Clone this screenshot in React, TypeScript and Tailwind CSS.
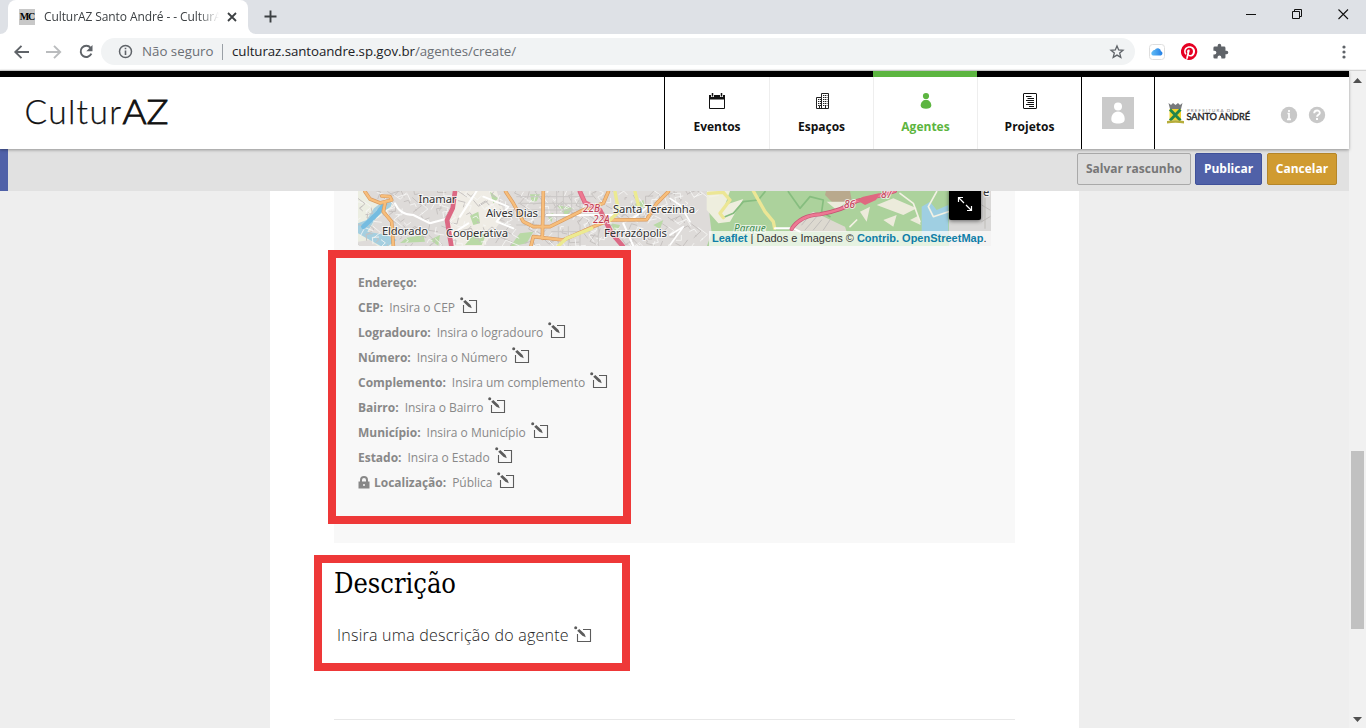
import React from "react";

const UI = "font-['Open_Sans','Noto_Sans',sans-serif]";

function EditIcon({ className = "" }: { className?: string }) {
  return (
    <svg width="18" height="17" viewBox="0 0 18 17" className={"shrink-0 " + className} fill="none">
      <path d="M9 3.500H16.500V15.500H3.500V8" stroke="#5c5c5c" strokeWidth="1.100" />
      <circle cx="1.700" cy="1.800" r="1.500" fill="#5c5c5c" />
      <path d="M3.200 4.800L5.300 3L10.600 8L11.800 11.300L8.400 9.800Z" fill="#5c5c5c" />
    </svg>
  );
}

function TabStrip() {
  return (
    <div className="flex h-[34px] bg-[#dee1e6]">
      <div className="flex w-2 items-end">
        <div className="h-2 w-2 bg-white"><div className="h-2 w-2 rounded-br-lg bg-[#dee1e6]" /></div>
      </div>
      <div className="flex h-[34px] w-60 items-center rounded-t-lg bg-white pl-[11px]">
        <div className="flex h-4 w-4 items-center justify-center bg-[#c8c8c8]">
          <span className="font-['Liberation_Serif',serif] text-[10px] font-bold leading-none tracking-[-1px] text-black">MC</span>
        </div>
        <div className="ml-[9px] w-[175px] overflow-hidden whitespace-nowrap text-[12px] leading-4 tracking-[-0.09px] text-[#3c4043] [mask-image:linear-gradient(to_right,black_88%,transparent)]">
          CulturAZ Santo André - - CulturA
        </div>
        <svg width="10" height="10" viewBox="0 0 10 10" className="ml-2"><path d="M1 1L9 9M9 1L1 9" stroke="#3c4043" strokeWidth="1.8" /></svg>
      </div>
      <div className="flex w-2 items-end">
        <div className="h-2 w-2 bg-white"><div className="h-2 w-2 rounded-bl-lg bg-[#dee1e6]" /></div>
      </div>
      <svg width="13" height="13" viewBox="0 0 13 13" className="ml-[8px] mt-[10px]"><path d="M6.5 .5V12.5M.5 6.5H12.5" stroke="#3c4043" strokeWidth="1.9" /></svg>
      <div className="grow" />
      <svg width="112" height="28" viewBox="0 0 112 28" fill="none" stroke="#111" className="mr-2">
        <path d="M0 14.5H10" />
        <path d="M46.5 11.5H53.5V18.5H46.5ZM48.5 11.5V9.500H55.5V16.500H53.5" />
        <path d="M92.500 9.500L102 19M102 9.500L92.500 19" strokeWidth="1.1" />
      </svg>
    </div>
  );
}

function Toolbar() {
  return (
    <div className="flex h-9 items-center border-b border-[#f4f4f4] bg-white">
      <svg width="90" height="20" viewBox="0 0 90 20" fill="none" className="ml-[10px]" strokeWidth="1.9">
        <path d="M19 10H5.5M11.500 3.800L5.300 10L11.500 16.200" stroke="#5f6368" />
        <path d="M36 10H50M44 3.800L50.200 10L44 16.200" stroke="#babcbe" />
        <path d="M80.600 5.800A5.600 5.600 0 1 0 81.400 11.700" stroke="#5f6368" />
        <path d="M82.500 3V9.200H76.300Z" fill="#5f6368" />
      </svg>
      <div className="ml-[1px] flex h-[27px] w-[1034px] items-center rounded-full bg-[#f1f3f4] pl-[17px] pr-[10px]">
        <svg width="15" height="15" viewBox="0 0 15 15" fill="none"><circle cx="7.500" cy="7.500" r="6" stroke="#5f6368" strokeWidth="1.5" /><path d="M7.500 6.500V11M7.500 3.800V5.300" stroke="#5f6368" strokeWidth="1.6" /></svg>
        <span className="ml-[9px] mt-px w-[73px] whitespace-nowrap text-[13.300px] text-[#6b6f74]">Não seguro</span>
        <span className="ml-[7px] h-4 w-px bg-[#9aa0a6]" />
        <span className="ml-[9px] mt-px whitespace-nowrap text-[13.300px] tracking-[-0.07px] text-[#202124]">culturaz.santoandre.sp.gov.br<span className="text-[#6b6f74]">/agentes/create/</span></span>
        <span className="grow" />
        <svg width="16" height="16" viewBox="0 0 16 16" fill="none"><path d="M8 2L9.700 6L14 6.300L10.700 9.100L11.800 13.400L8 11.100L4.200 13.400L5.300 9.100L2 6.300L6.300 6Z" stroke="#5f6368" strokeWidth="1.3" /></svg>
      </div>
      <svg width="16" height="16" viewBox="0 0 16 16" className="ml-[14px]">
        <defs><linearGradient id="cloud"><stop stopColor="#61bdf6" /><stop offset="1" stopColor="#247fe5" /></linearGradient></defs>
        <rect x=".5" y=".5" width="15" height="15" rx="3" fill="#fff" stroke="#dedede" />
        <path d="M4 11.500A2.200 2.200 0 0 1 3.300 7.500A2.200 2.200 0 0 1 5.700 6A3.400 3.400 0 0 1 12 7.200A2.300 2.300 0 0 1 12 11.500Z" fill="url(#cloud)" />
      </svg>
      <svg width="17" height="17" viewBox="0 0 24 24" className="ml-4"><path fill="#e60023" d="M12 0a12 12 0 0 0-4.400 23.200c-.1-.9-.2-2.400 0-3.400l1.400-6s-.4-.7-.4-1.700c0-1.700 1-2.900 2.200-2.900 1 0 1.500.8 1.500 1.700 0 1-.7 2.600-1 4-.3 1.200.6 2.200 1.800 2.200 2.100 0 3.800-2.200 3.800-5.500 0-2.900-2.100-4.900-5-4.900-3.400 0-5.400 2.600-5.400 5.200 0 1 .4 2.100.9 2.700.1.100.1.200.1.400l-.3 1.400c-.1.200-.2.300-.4.200-1.500-.7-2.400-2.900-2.400-4.700 0-3.800 2.800-7.300 8-7.300 4.200 0 7.400 3 7.400 7 0 4.200-2.600 7.500-6.300 7.500-1.200 0-2.400-.6-2.800-1.400l-.7 2.900c-.3 1-1 2.300-1.500 3.100A12 12 0 1 0 12 0Z" /></svg>
      <svg width="17" height="17" viewBox="0 0 24 24" className="ml-[14px]"><path fill="#5f6368" d="M20.500 11H19V7a2 2 0 0 0-2-2h-4V3.500a2.500 2.500 0 0 0-5 0V5H4a2 2 0 0 0-2 2v3.800h1.500a2.700 2.700 0 0 1 0 5.400H2V20a2 2 0 0 0 2 2h3.800v-1.500a2.700 2.700 0 0 1 5.400 0V22H17a2 2 0 0 0 2-2v-4h1.500a2.500 2.500 0 0 0 0-5Z" /></svg>
      <span className="grow" />
      <svg width="4" height="16" viewBox="0 0 4 16" fill="#5f6368" className="mr-[20px]"><circle cx="2" cy="3" r="1.600" /><circle cx="2" cy="8" r="1.600" /><circle cx="2" cy="13" r="1.600" /></svg>
    </div>
  );
}

function CalendarIcon() {
  return <svg width="18" height="18" viewBox="0 0 18 18"><path d="M1.500 4V16.500H16.500V4" fill="none" stroke="#111" /><path d="M1 3H3V5H6V3H12V5H15V3H17V7.500H1Z" fill="#111" /><path d="M4.500 1V4.500M13.500 1V4.500" stroke="#111" strokeWidth="1.500" /></svg>;
}
function BuildingIcon() {
  return <svg width="18" height="18" viewBox="0 0 18 18" fill="none" stroke="#222"><path d="M3.500 16.500V5.500H8.500V1.500H15.500V16.500ZM8.500 5.500V16" /><path d="M5 7.500H8M5 9.500H8M5 11.500H8M5 13.500H8M10 3.500H14.500M10 5.500H14.500M10 7.500H14.500M10 9.500H14.500M10 11.500H14.500M10 13.500H14.500" strokeDasharray="1.300 .6" /><path d="M6.500 13.500V16M12.500 13.500V16" /></svg>;
}
function AgentIcon() {
  return <svg width="18" height="18" viewBox="0 0 18 18" fill="#5cb540"><circle cx="9" cy="4" r="3.100" /><path d="M9 7.700C5.500 7.700 3.700 11 3.700 13.500C3.700 15.800 6 16.700 9 16.700S14.300 15.800 14.300 13.500C14.300 11 12.500 7.700 9 7.700Z" /></svg>;
}
function ProjectIcon() {
  return <svg width="18" height="18" viewBox="0 0 18 18" fill="none" stroke="#111"><rect x="2.500" y="1.500" width="13" height="15" rx=".5" /><path d="M5 4.500H10.500M6.500 6.500H13M5 8.500H13M6.500 10.500H13M5 12.500H13M8 14.500H13" /></svg>;
}

function NavItem({ label, icon, active = false, first = false }: { label: string; icon: React.ReactNode; active?: boolean; first?: boolean }) {
  return (
    <div className={"flex w-[104px] flex-col " + (first ? "" : "border-l border-[#eeeeee]")}>
      <div className={"h-[6px] " + (first ? "" : "-ml-px ") + (active ? "bg-[#5cb540]" : "bg-black")} />
      <div className="flex flex-col items-center pt-[15px]">
        {icon}
        <span className={"mt-[8px] text-[12px] font-bold leading-[18px] " + (active ? "text-[#5cb540]" : "text-[#111]")}>{label}</span>
      </div>
    </div>
  );
}

function CityLogo() {
  return (
    <svg width="90" height="24" viewBox="0 0 90 24">
      <path d="M1.500 1L4 3L6 1L8.500 3L11 1L13 3L15.500 1L14 7H3Z" fill="#77797c" />
      <path d="M2.500 7H14V18.500H2.500Z" fill="#f2d42b" />
      <path d="M3 7.500L13.500 18.500M13.500 7.500L3 18.500" stroke="#23854b" strokeWidth="2.800" />
      <path d="M0 19Q8.500 17.500 17 19V21.500Q8.500 20 0 21.500Z" fill="#b6ad3b" />
      <text x="20" y="9.500" fontSize="4.500" fill="#888" textLength="47" fontFamily="Lato, sans-serif">PREFEITURA DE</text>
      <text x="19.500" y="17.500" fontSize="9.300" fontWeight="400" fill="#222" stroke="#222" strokeWidth=".35" textLength="63.500" fontFamily="Lato, sans-serif">SANTO ANDRÉ</text>
    </svg>
  );
}

function Header() {
  return (
    <header className="relative z-10 flex h-[78px] bg-white shadow-[0_1px_3px_rgba(0,0,0,0.35)]">
      <div className="flex w-[664px] flex-col">
        <div className="h-[6px] bg-black" />
        <svg width="170" height="56" viewBox="0 -8 170 56" className="ml-5 mt-[8px]" fontFamily="Lato, sans-serif" fill="#111">
          <text x="4.500" y="31" fontSize="33.500" fontWeight="300" stroke="#111" strokeWidth=".25" textLength="96.500">Cultur</text>
          <text x="102.500" y="31" fontSize="33.500" fontWeight="300" stroke="#111" strokeWidth=".9" textLength="46" lengthAdjust="spacingAndGlyphs">AZ</text>
        </svg>
      </div>
      <div className="flex w-[418px] border-x border-black">
        <NavItem label="Eventos" icon={<CalendarIcon />} first />
        <NavItem label="Espaços" icon={<BuildingIcon />} />
        <NavItem label="Agentes" icon={<AgentIcon />} active />
        <NavItem label="Projetos" icon={<ProjectIcon />} />
      </div>
      <div className="flex w-[73px] flex-col items-center border-r border-black">
        <div className="h-[6px] w-full bg-black" />
        <svg width="32" height="32" viewBox="0 0 32 32" className="mt-5"><path d="M0 0H32V32H0Z" fill="#cacaca" /><g fill="#fff"><circle cx="16" cy="9.500" r="4" /><path d="M16 14.500C11.500 14.500 9.300 18.500 9.300 22S12 26.500 16 26.500S22.700 25.500 22.700 22S20.500 14.500 16 14.500Z" /></g></svg>
      </div>
      <div className="flex grow flex-col">
        <div className="h-[6px] bg-black" />
        <div className="flex items-center pl-3 pt-[25px]">
          <CityLogo />
          <svg width="46" height="18" viewBox="0 0 46 18" className="ml-[23px] mt-[2px]"><circle cx="9" cy="9" r="8.200" fill="#c8c8c8" /><circle cx="37" cy="9" r="8.200" fill="#c8c8c8" /><path d="M7.500 7.500H9V13M7 13.300H11M9 4V6" fill="none" stroke="#fff" strokeWidth="1.700" /><path d="M34.200 7.300C34.200 3.500 40 3.700 39.800 7C39.700 8.700 37 8.800 37 10.700M37 12V14" fill="none" stroke="#fff" strokeWidth="1.900" /></svg>
        </div>
      </div>
    </header>
  );
}

function ActionBar() {
  return (
    <div className="flex h-[42px] bg-[#e1e1e1]">
      <div className="w-2 bg-[#5061a8]" />
      <div className="flex grow items-start justify-end gap-[5px] pr-3 pt-1 text-[12px] font-bold">
        <button className="h-8 w-[114px] whitespace-nowrap rounded-[2px] border border-[#a9a9a9] bg-[#dedede] text-[#777]">Salvar rascunho</button>
        <button className="-ml-px h-8 w-[67px] rounded-[2px] border border-[#40519a] bg-[#5061a8] text-white">Publicar</button>
        <button className="h-8 w-[70px] rounded-[2px] border border-[#b58629] bg-[#d09b31] text-white">Cancelar</button>
      </div>
    </div>
  );
}

const streetLines = Array.from({ length: 150 }, (_, i) => {
  const x = (i * 137.5) % 1050;
  const y = (i * 61.7) % 190;
  const dx = ((i * 29) % 60) - 30;
  const dy = ((i * 43) % 50) - 25;
  return `M${x} ${y}l${dx} ${dy}l${-dy} ${dx * 0.7}`;
}).join("");

function MapView() {
  return (
    <div className="relative h-[55px] w-[633px] overflow-hidden">
      <svg width="633" height="55" viewBox="0 0 633 55" className="block" fill="none">
        <path d="M0 0H633V55H0Z" fill="#dedbd9" />
        <g transform="translate(-8 -6) scale(.33333)" strokeLinejoin="round" strokeLinecap="round">
          <path d="M315 18L440 18L465 90L400 185H310L295 130Z" fill="#efece5" />
          <path d="M24 18H45L75 52L130 60L110 80L75 105L55 140L120 160L130 185H85L60 165L24 170Z" fill="#eceee2" />
          <path d="M105 45L130 40L122 65L80 95L52 140L110 150L140 165L115 183H92L50 160L24 145V115L50 105L72 70Z" fill="#a5cfe0" />
          <g fill="#b9d9a6"><path d="M510 145L550 140L530 175L480 185ZM540 28L570 28L560 48L545 52ZM360 92L385 80L390 115L370 120ZM620 60L670 70L650 95ZM170 158L220 150L225 170L150 174ZM420 20L445 40L430 55ZM240 165L270 150L265 182ZM850 60L880 45L885 70ZM910 120L940 105L930 132ZM370 150L410 145L395 180H345ZM780 115L810 120L800 145ZM590 90L610 84L605 112Z" /></g>
          <path d={streetLines} stroke="#c6c2c0" strokeWidth="3" />
          <path d={streetLines} transform="translate(19 10)" stroke="#f7f7f5" strokeWidth="2.500" />
          <path d="M500 35H730M505 55H720M520 75H700M530 95H680M620 18V110M640 18V110M665 18V100M690 18V90M500 120H560M605 140H720M625 125V183M655 125V183M690 120V183M745 125V183" stroke="#cac8c6" strokeWidth="3" />
          <path d="M135 55Q150 90 190 90L240 115L295 100M380 18L330 95M400 35L475 65L440 110L490 130M590 90H790M820 115L850 183M900 60L850 100M355 115L300 150" stroke="#fff" strokeWidth="6" />
          <path d="M105 55L80 88L40 125" stroke="#75bce0" strokeWidth="14" />
          <g stroke="#d99b61" strokeWidth="11"><path d="M45 20L60 42L90 54L125 45L120 35L95 33M105 55L100 80L125 110L130 183M467 20L490 55L520 110L550 125H600L700 75L760 55L775 20M580 20L577 160M543 183L550 155L640 165L730 125L780 105L890 104L920 55L955 20" /></g>
          <g stroke="#f7be7b" strokeWidth="7"><path d="M45 20L60 42L90 54L125 45L120 35L95 33M105 55L100 80L125 110L130 183M467 20L490 55L520 110L550 125H600L700 75L760 55L775 20M580 20L577 160M543 183L550 155L640 165L730 125L780 105L890 104L920 55L955 20" /></g>
          <path d="M795 20L806 80L780 105M855 20L865 60M625 183L650 160L725 130" stroke="#ecea91" strokeWidth="10" />
          <path d="M315 20L308 70L291 105L304 183M690 20L705 53L750 75L785 145L818 183" stroke="#dc6984" strokeWidth="14" />
          <path d="M690 20L705 53L750 75" stroke="#ee7991" strokeWidth="8" />
        </g>
        <g transform="translate(312 -6) scale(.33333)" strokeLinecap="round" strokeLinejoin="round">
          <path d="M110 18H837V185H110L125 145Z" fill="#acd29c" />
          <path d="M110 18H180L165 60L220 42L180 110L145 115L110 75Z" fill="#eeeede" />
          <path d="M468 18H540L545 45L500 65L465 30Z" fill="#b9a98d" />
          <path d="M385 105L430 80L525 125L530 140H360Z" fill="#ddd9d0" />
          <path d="M470 50L530 50L500 75ZM620 60L670 40L740 70L700 90ZM570 80L600 65L590 110ZM640 105L680 90L670 125ZM720 105L745 92L752 120Z" fill="#ecebdb" />
          <path d="M755 65L780 50L800 75L835 60V150L755 155Z" fill="#9fcfe2" />
          <path d="M837 18H965V185H837Z" fill="#d9d8d7" />
          <path d="M285 20L265 45L220 50L190 85L165 95M355 20L390 70L420 35L460 45L455 80L480 95" stroke="#86bd7f" strokeWidth="5" />
          <path d="M800 20L775 65L790 95L835 80M690 25L730 55L750 110M540 125L560 105M120 35L145 30" stroke="#f3f1e4" strokeWidth="5" />
          <path d="M395 120L420 90M405 135L440 95M430 135L455 105M460 135L480 105M935 60L960 75M935 110L960 95M945 40V130" stroke="#c1bebb" strokeWidth="3" />
          <path d="M115 25L160 22L180 45L150 85L160 98M250 18L285 80L310 110L314 130" stroke="#ece695" strokeWidth="10" />
          <path d="M315 130H370L390 140" stroke="#fff" strokeWidth="6" />
          <path d="M365 132Q390 92 450 88Q520 75 560 48L630 32L675 18" stroke="#c75475" strokeWidth="12" />
          <path d="M365 132Q390 92 450 88Q520 75 560 48L630 32L675 18" stroke="#ed7993" strokeWidth="8" />
          <path d="M560 45L580 35L630 24L618 45L585 60Z" fill="#df6980" />
          <path d="M0 40L30 60L60 110M0 150L40 125L0 180" stroke="#fff" strokeWidth="5" />
        </g>
        <g fontFamily="Noto Sans, sans-serif" fontSize="11.300" fill="#333" stroke="#fff" strokeWidth="2" strokeOpacity=".7" paintOrder="stroke">
          <text x="60.500" y="12" textLength="38">Inamar</text><text x="128" y="26" textLength="52">Alves Dias</text><text x="255" y="22" textLength="82">Santa Terezinha</text>
          <text x="24" y="44" textLength="46">Eldorado</text><text x="88" y="46" textLength="62">Cooperativa</text><text x="246" y="46" textLength="63">Ferrazópolis</text><text x="625" y="5">e</text>
          <g fill="#bd3850" fontSize="10" fontStyle="italic"><text x="225" y="21">22B</text><text x="235" y="32">22A</text><text x="486" y="17">86</text><text x="523" y="7">87</text></g>
          <text x="376" y="41" fontSize="10" fontStyle="italic" fill="#398b4e">Parque</text>
        </g>
      </svg>
      <div className="absolute right-[10px] top-[-3px] flex h-8 w-8 items-center justify-center rounded-[2px] bg-black shadow-[0_1px_4px_rgba(0,0,0,0.55)]">
        <svg width="16" height="16" viewBox="0 0 16 16" fill="none" stroke="#fff" strokeWidth="1.200"><path d="M1.500 6V1.500H6M1.500 1.500L7 7M10 14.500H14.500V10M14.500 14.500L9 9" /></svg>
      </div>
      <div className="absolute bottom-0 right-0 flex h-[15px] w-[282px] items-center whitespace-nowrap bg-white/70 pl-[3px] font-['Liberation_Sans',sans-serif] text-[11px] leading-none text-[#333]">
        <span><b className="text-[#0f7ea8]">Leaflet</b> | Dados e Imagens © <b className="text-[#0f7ea8]">Contrib. OpenStreetMap</b>.</span>
      </div>
    </div>
  );
}

const addressFields: [string, string][] = [
  ["CEP:", "Insira o CEP"],
  ["Logradouro:", "Insira o logradouro"],
  ["Número:", "Insira o Número"],
  ["Complemento:", "Insira um complemento"],
  ["Bairro:", "Insira o Bairro"],
  ["Município:", "Insira o Município"],
  ["Estado:", "Insira o Estado"],
  ["Localização:", "Pública"],
];

function Address() {
  return (
    <div className="mt-6 text-[12px] tracking-[-0.015px] text-[#888]">
      <div className="flex h-[25px] items-center font-bold">Endereço:</div>
      {addressFields.map(([label, value]) => (
        <div key={label} className="flex h-[25px] items-center whitespace-nowrap">
          {label === "Localização:" && <svg width="12" height="13" viewBox="0 0 12 13" className="mr-1"><path d="M3 6V4A3 3 0 0 1 9 4V6" fill="none" stroke="#888" strokeWidth="2" /><path d="M.500 5.500H11.500V12.500H.500Z" fill="#888" /><path d="M6 8V10" stroke="#f7f7f7" strokeWidth="1.500" /></svg>}
          <span className="font-bold">{label}</span>
          <span className="ml-[6px]">{value}</span>
          <EditIcon className="-mt-1 ml-[5px]" />
        </div>
      ))}
    </div>
  );
}

function Content() {
  return (
    <main className="relative flex h-[537px] bg-[#eeeeee] pl-[270px]">
      <div className="w-[809px] overflow-hidden bg-white px-16">
        <section className="h-[352px] w-[681px] bg-[#f8f8f8] px-6">
          <MapView />
          <Address />
        </section>
        <h2 className="mt-[21px] h-10 font-['DejaVu_Serif_Condensed','DejaVu_Serif',serif] text-[27px] leading-10 text-black">Descrição</h2>
        <div className="mt-[19px] flex h-6 items-center pl-[3px] text-[16px] font-light tracking-[0.24px] text-[#222]">
          <span>Insira uma descrição do agente</span>
          <EditIcon className="-mt-[2px] ml-[5px]" />
        </div>
        <hr className="mt-[72px] border-[#e8e8e8]" />
      </div>
      <div className="absolute left-[328px] top-[59px] h-[274px] w-[303px] border-8 border-[#ee3838]" />
      <div className="absolute left-[314px] top-[364px] h-[116px] w-[316px] border-8 border-[#ee3838]" />
    </main>
  );
}

function Scrollbar() {
  return (
    <div className="flex w-[17px] flex-col items-center bg-[#f1f1f1] pt-[7px]">
      <svg width="9" height="5" viewBox="0 0 9 5"><path d="M0 5L4.500 0L9 5Z" fill="#505050" /></svg>
      <div className="mt-[368px] h-[178px] w-[13px] bg-[#c1c1c1]" />
      <div className="grow" />
      <svg width="9" height="5" viewBox="0 0 9 5" className="mb-[6px]"><path d="M0 0H9L4.500 5Z" fill="#505050" /></svg>
    </div>
  );
}

export default function App() {
  return (
    <div className={"flex h-[728px] w-[1366px] flex-col overflow-hidden bg-white " + UI}>
      <TabStrip />
      <Toolbar />
      <div className="flex h-[658px] border-t border-[#d4d4d4]">
        <div className="w-[1349px]">
          <Header />
          <ActionBar />
          <Content />
        </div>
        <Scrollbar />
      </div>
    </div>
  );
}
